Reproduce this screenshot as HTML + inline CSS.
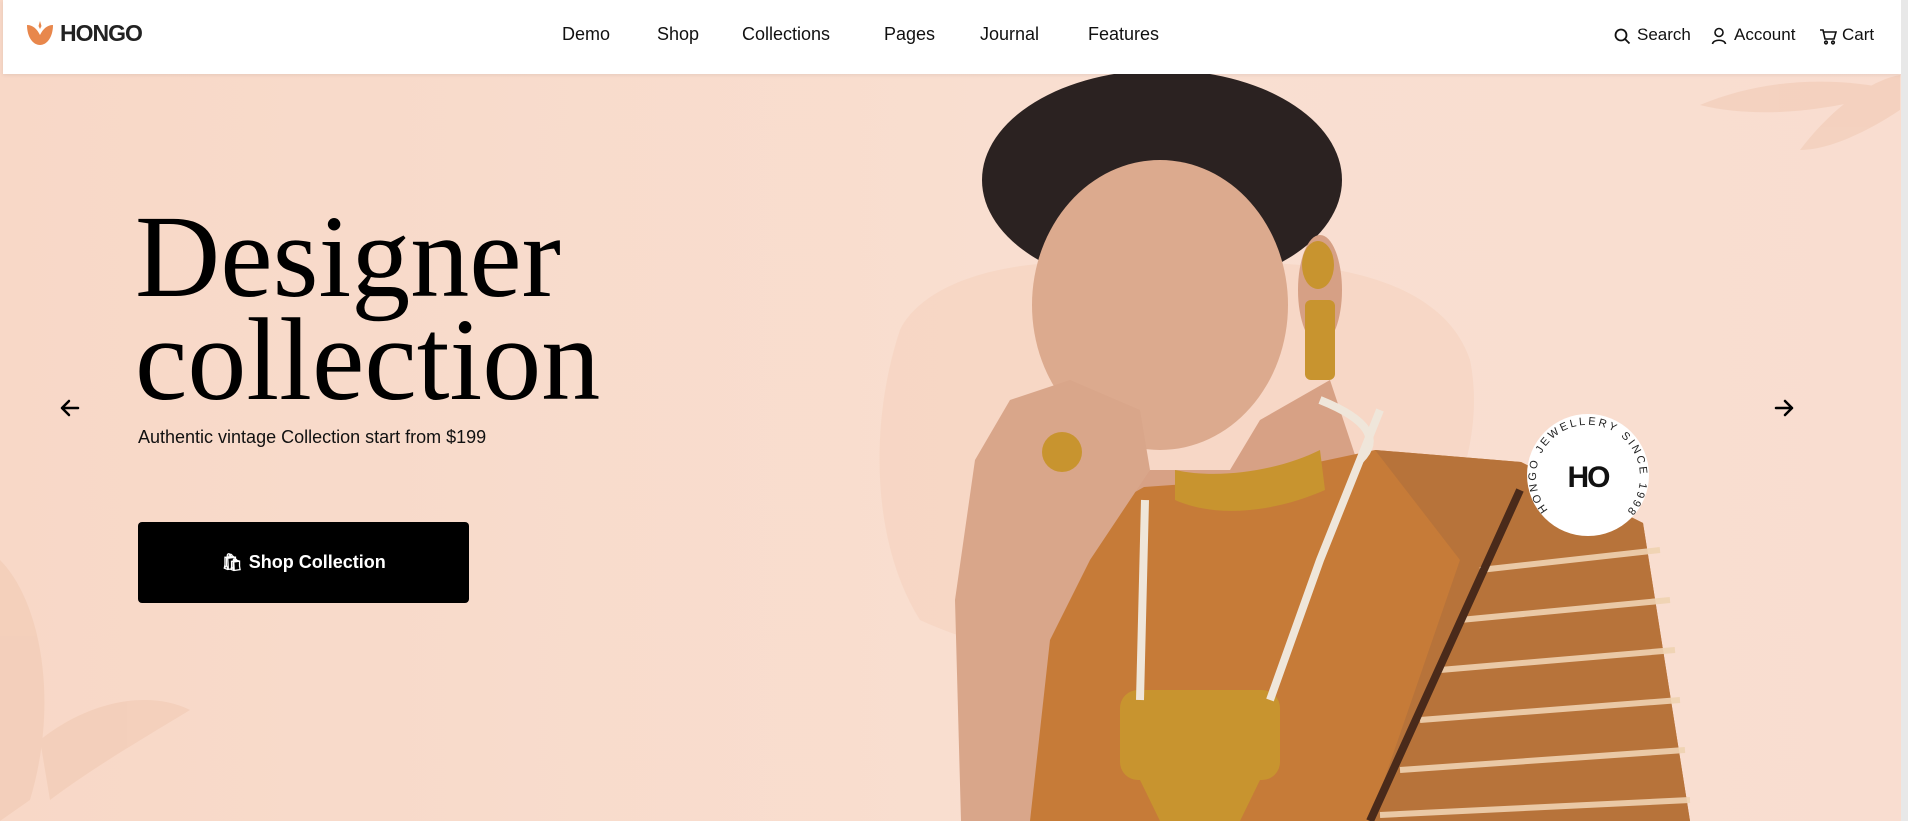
<!DOCTYPE html>
<html><head><meta charset="utf-8"><style>
*{margin:0;padding:0;box-sizing:border-box}
html,body{width:1908px;height:821px;overflow:hidden;background:#f9dccd;font-family:"Liberation Sans",sans-serif}
.hero{position:absolute;left:0;top:0;width:1908px;height:821px;background:linear-gradient(90deg,#f8d8c7 0%,#f9dfd1 60%,#f9ddd0 100%)}
header{position:absolute;left:3px;top:0;width:1898px;height:74px;background:#fff;box-shadow:0 1px 4px rgba(0,0,0,.08)}
.logo{position:absolute;left:22px;top:19px;display:flex;align-items:center}
.logo span{font-weight:bold;font-size:23px;color:#222;letter-spacing:-1px;margin-left:5px}
nav a{position:absolute;top:24px;font-size:18px;color:#111;text-decoration:none}
.r{position:absolute;top:25px;font-size:17px;color:#111}
h1{position:absolute;left:135px;top:205px;font-family:"Liberation Serif",serif;font-weight:normal;font-size:118px;line-height:103px;color:#000}
.sub{position:absolute;left:138px;top:427px;font-size:18px;color:#111}
.btn{position:absolute;left:138px;top:522px;width:331px;height:81px;background:#000;border-radius:4px;color:#fff;font-weight:bold;font-size:18px;display:flex;align-items:center;justify-content:center}
.sb{position:absolute;right:0;top:0;width:7px;height:821px;background:#e8e8e8}
</style></head><body>
<div class="hero">
<svg width="1908" height="821" style="position:absolute;left:0;top:0">
<g fill="#f0c7b0" opacity=".5">
<path d="M0 560 C40 600 60 700 30 800 L0 821Z"/>
<path d="M40 740 C90 700 150 690 190 710 C140 740 90 770 50 800Z"/>
<path d="M1700 105 C1760 80 1830 75 1895 90 C1840 110 1760 120 1700 105Z"/>
<path d="M1800 150 C1830 110 1870 80 1900 75 L1900 110 C1870 130 1830 150 1800 150Z"/>
</g>
<path d="M900 330 C930 270 1050 250 1150 270 C1300 250 1440 270 1470 360 C1490 460 1430 560 1380 620 C1250 680 1050 680 920 620 C870 540 870 420 900 330Z" fill="#f3cfb8" opacity=".45"/>
<ellipse cx="1162" cy="180" rx="180" ry="110" fill="#2b2221"/>
<path d="M1040 800 L1040 600 L1080 520 L1150 470 L1230 470 L1260 420 L1330 380 L1360 470 L1400 470 L1390 520 Z" fill="#d7a185"/>
<ellipse cx="1160" cy="305" rx="128" ry="145" fill="#dcaa8e"/>
<ellipse cx="1320" cy="290" rx="22" ry="55" fill="#d6a085"/>
<path d="M1016 821 L1022 608 L1059 535 L1144 487 L1229 481 L1375 450 L1521 462 L1643 523 L1690 821Z" fill="#c67b38"/>
<path d="M1375 450 L1521 462 L1643 523 L1690 821 L1370 821 L1460 560Z" fill="#b7733a"/>
<g stroke="#f0d3b2" stroke-width="6" opacity=".9">
<line x1="1480" y1="570" x2="1660" y2="550"/><line x1="1460" y1="620" x2="1670" y2="600"/>
<line x1="1440" y1="670" x2="1675" y2="650"/><line x1="1420" y1="720" x2="1680" y2="700"/>
<line x1="1400" y1="770" x2="1685" y2="750"/><line x1="1380" y1="815" x2="1690" y2="800"/>
</g>
<line x1="1520" y1="490" x2="1370" y2="821" stroke="#4a2a1a" stroke-width="8"/>
<path d="M961 821 L955 600 L975 460 L1010 400 L1070 380 L1140 410 L1150 470 L1090 560 L1050 640 L1030 821Z" fill="#d9a68a"/>
<g fill="#c8942f">
<ellipse cx="1318" cy="265" rx="16" ry="24"/><rect x="1305" y="300" width="30" height="80" rx="6"/>
<path d="M1175 470 C1220 480 1280 470 1320 450 L1325 490 C1280 510 1220 520 1175 500Z"/>
<rect x="1120" y="690" width="160" height="90" rx="18"/>
<path d="M1140 780 L1260 780 L1240 821 L1160 821Z"/>
<circle cx="1062" cy="452" r="20"/>
</g>
<g stroke="#efe6da" stroke-width="8" fill="none">
<path d="M1145 500 L1140 700"/><path d="M1380 410 L1320 560 L1270 700"/>
<path d="M1320 400 C1370 420 1380 440 1360 460"/>
</g>
<circle cx="1588" cy="475" r="61" fill="#fff"/>
<text x="1588" y="487" text-anchor="middle" font-family="Liberation Sans" font-weight="bold" font-size="30" fill="#111" letter-spacing="-2">HO</text>
<path id="c" d="M1548 510 A52 52 0 1 1 1628 510" fill="none"/>
<text font-family="Liberation Sans" font-size="11" fill="#222" letter-spacing="2.5"><textPath href="#c">HONGO JEWELLERY SINCE 1998</textPath></text>
<g stroke="#000" stroke-width="2.5" fill="none" stroke-linecap="round" stroke-linejoin="round">
<path d="M78 408 H62 M69 401 L62 408 L69 415"/>
<path d="M1776 408 H1792 M1785 401 L1792 408 L1785 415"/>
</g>
</svg>
</div>
<header>
<div class="logo"><svg width="30" height="28" viewBox="0 0 30 28"><path d="M2 6 C8 6 12 10 15 16 C18 10 22 6 28 6 C28 18 22 26 15 26 C8 26 2 18 2 6Z" fill="#e8874c"/><path d="M15 2 L16.5 7 L15 10 L13.5 7Z" fill="#e8874c"/></svg><span>HONGO</span></div>
<nav><a style="left:559px">Demo</a><a style="left:654px">Shop</a><a style="left:739px">Collections</a><a style="left:881px">Pages</a><a style="left:977px">Journal</a><a style="left:1085px">Features</a></nav>
<svg style="position:absolute;left:1611px;top:28px" width="17" height="17" viewBox="0 0 17 17" fill="none" stroke="#111" stroke-width="1.8"><circle cx="7" cy="7" r="5.5"/><line x1="11" y1="11" x2="15.5" y2="15.5"/></svg>
<span class="r" style="left:1634px">Search</span>
<svg style="position:absolute;left:1708px;top:27px" width="16" height="18" viewBox="0 0 16 18" fill="none" stroke="#111" stroke-width="1.6"><circle cx="8" cy="5.5" r="4"/><path d="M1.5 17 C2 12 14 12 14.5 17"/></svg>
<span class="r" style="left:1731px">Account</span>
<svg style="position:absolute;left:1816px;top:28px" width="18" height="17" viewBox="0 0 18 17" fill="none" stroke="#111" stroke-width="1.6"><path d="M1 2 H4 L6 11 H15 L17 4 H5"/><circle cx="7" cy="14.5" r="1.3"/><circle cx="14" cy="14.5" r="1.3"/></svg>
<span class="r" style="left:1839px">Cart</span>
</header>
<h1>Designer<br>collection</h1>
<div class="sub">Authentic vintage Collection start from $199</div>
<div class="btn"><span style="font-size:17px;margin-right:6px">🛍</span>Shop Collection</div>
<div class="sb"></div>
</body></html>
